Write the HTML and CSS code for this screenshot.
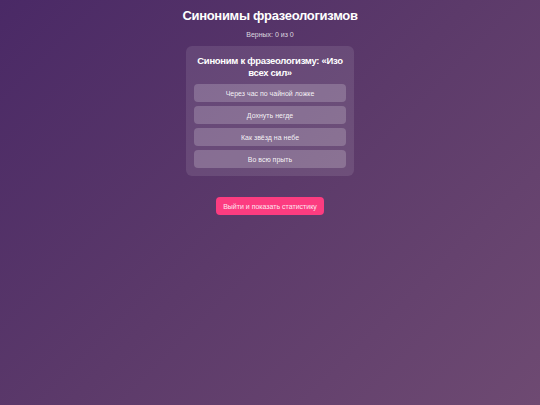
FILE: index.html
```html
<!DOCTYPE html>
<html lang="ru">
<head>
<meta charset="utf-8">
<link rel="stylesheet" href="styles.css">
</head>
<body>
<div class="page">
  <h1 class="title">Синонимы фразеологизмов</h1>
  <div class="score">Верных: 0 из 0</div>
  <div class="card">
    <div class="question">Синоним к фразеологизму: «Изо всех сил»</div>
    <div class="options">
      <button class="option">Через час по чайной ложке</button>
      <button class="option">Дохнуть негде</button>
      <button class="option">Как звёзд на небе</button>
      <button class="option">Во всю прыть</button>
    </div>
  </div>
  <button class="exit">Выйти и показать статистику</button>
</div>
</body>
</html>
```
FILE: styles.css
```css
html, body {
  margin: 0;
  height: 100%;
}
body {
  background: linear-gradient(135deg, #4a2966 0%, #5c3a6a 50%, #6e4a72 100%);
  font-family: "Liberation Sans", Arial, sans-serif;
  color: #fff;
}
.page {
  display: flex;
  flex-direction: column;
  align-items: center;
  padding-top: 7px;
}
.title {
  margin: 0;
  font-size: 13px;
  letter-spacing: -0.3px;
  line-height: 18px;
  font-weight: bold;
}
.score {
  margin-top: 5px;
  font-size: 7px;
  line-height: 10px;
  color: rgba(255,255,255,0.8);
}
.card {
  margin-top: 6px;
  width: 168px;
  box-sizing: border-box;
  padding: 8px;
  background: rgba(255,255,255,0.1);
  border-radius: 6px;
}
.question {
  font-size: 9.5px;
  letter-spacing: -0.3px;
  line-height: 12px;
  font-weight: bold;
  text-align: center;
  margin: 1px 0 5px;
}
.options {
  display: flex;
  flex-direction: column;
  gap: 4px;
}
.option {
  height: 18px;
  border: none;
  border-radius: 4px;
  background: rgba(255,255,255,0.2);
  color: rgba(255,255,255,0.92);
  font-family: inherit;
  font-size: 7px;
  padding: 0;
}
.exit {
  margin-top: 21px;
  height: 18px;
  padding: 0 7px;
  border: none;
  border-radius: 4px;
  background: #fc3c80;
  color: #fde6ef;
  font-family: inherit;
  font-size: 7px;
}
```
